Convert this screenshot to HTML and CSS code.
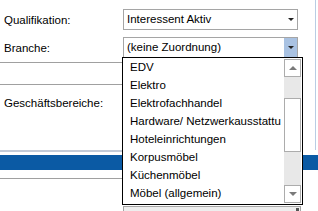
FILE: index.html
```html
<!DOCTYPE html>
<html>
  <head>
    <link rel="stylesheet" href="styles.css">
  </head>
  <body>
    <div class="screen">
      <div class="upper">
        <div class="field-row first">
          <span class="label">Qualifikation:</span>
          <div class="combo">
            <span class="combo-text">Interessent Aktiv</span>
            <span class="combo-btn"><span class="arrow-down"></span></span>
          </div>
        </div>
        <div class="field-row">
          <span class="label">Branche:</span>
          <div class="combo open">
            <span class="combo-text">(keine Zuordnung)</span>
            <span class="combo-btn"><span class="arrow-down"></span></span>
          </div>
        </div>
        <div class="sep sep-top"></div>
        <div class="sep sep-mid"></div>
        <div class="field-row">
          <span class="label">Geschäftsbereiche:</span>
        </div>
        <div class="sep-light"></div>
      </div>
      <div class="blue-bar"></div>
      <div class="gray-line"></div>
      <div class="bottom-box"><span class="grip"></span></div>

      <div class="dropdown">
        <ul class="dropdown-list">
          <li>EDV</li>
          <li>Elektro</li>
          <li>Elektrofachhandel</li>
          <li>Hardware/ Netzwerkausstattu</li>
          <li>Hoteleinrichtungen</li>
          <li>Korpusmöbel</li>
          <li>Küchenmöbel</li>
          <li>Möbel (allgemein)</li>
        </ul>
        <div class="scrollbar">
          <div class="scroll-btn"><span class="arrow-up"></span></div>
          <div class="scroll-track">
            <div class="scroll-thumb"></div>
          </div>
          <div class="scroll-btn"><span class="arrow-down gray"></span></div>
        </div>
      </div>
    </div>
  </body>
</html>
```

FILE: styles.css
```css
* {
  box-sizing: border-box;
}
body {
  margin: 0;
  background-color: #fff;
  font-family: "Liberation Sans", Arial, sans-serif;
  font-size: 11.5px;
  color: #000;
}
.screen {
  position: relative;
  width: 318px;
  height: 211px;
  overflow: hidden;
}

.upper {
  width: 316px;
  height: 150px;
  padding-top: 9px;
  border-right: 1px solid #b9cde4;
}

.field-row {
  display: flex;
  align-items: center;
  height: 21px;
  margin-top: 7px;
}
.field-row.first {
  margin-top: 0;
}
.label {
  width: 123px;
  padding-left: 4px;
}

.combo {
  display: flex;
  width: 175px;
  height: 21px;
  border: 1px solid #a5a5a5;
  background-color: #fff;
}
.combo-text {
  flex: 1;
  padding-left: 3px;
  line-height: 19px;
}
.combo-btn {
  display: flex;
  align-items: center;
  justify-content: center;
  width: 13px;
}
.combo.open .combo-btn {
  background-color: #a9c2e2;
}

.arrow-down {
  width: 0;
  height: 0;
  border-left: 3px solid transparent;
  border-right: 3px solid transparent;
  border-top: 3px solid #222;
}
.arrow-down.gray {
  border-top-color: #7a7a7a;
  border-left-width: 4px;
  border-right-width: 4px;
  border-top-width: 4px;
}
.arrow-up {
  width: 0;
  height: 0;
  border-left: 4px solid transparent;
  border-right: 4px solid transparent;
  border-bottom: 4px solid #7a7a7a;
}

.sep {
  width: 290px;
  height: 1px;
  background-color: #a0a0a0;
}
.sep-top {
  margin-top: 4px;
}
.sep-mid {
  margin-top: 21px;
}
.sep-light {
  width: 290px;
  height: 2px;
  margin-top: 37px;
  background-color: #c3cbd8;
}

.blue-bar {
  height: 15px;
  margin-top: 5px;
  background-color: #0b5aa4;
}
.gray-line {
  width: 290px;
  height: 1px;
  margin-top: 8px;
  background-color: #a0a0a0;
}
.bottom-box {
  position: relative;
  width: 178px;
  height: 10px;
  margin-top: 27px;
  margin-left: 123px;
  border: 1px solid #a5a5a5;
  background-color: #eeeeee;
}
.grip {
  position: absolute;
  right: 1px;
  top: 1px;
  width: 3px;
  height: 3px;
  background-color: #555;
}

/* open list of the Branche combo */
.dropdown {
  position: absolute;
  left: 122px;
  top: 57px;
  width: 181px;
  height: 148px;
  display: flex;
  border: 1px solid #000;
  background-color: #fff;
}
.dropdown-list {
  flex: 1;
  margin: 0;
  padding: 0;
  list-style: none;
  overflow: hidden;
}
.dropdown-list li {
  height: 18px;
  line-height: 18px;
  padding-left: 7px;
  white-space: nowrap;
}
.scrollbar {
  display: flex;
  flex-direction: column;
  width: 17px;
  margin: 1px 1px 1px 0;
}
.scroll-btn {
  display: flex;
  align-items: center;
  justify-content: center;
  height: 18px;
  border: 1px solid #acacac;
  background-color: #fff;
}
.scroll-track {
  flex: 1;
  padding-top: 21px;
  background-color: #e8e8e8;
}
.scroll-thumb {
  height: 54px;
  border: 1px solid #acacac;
  background-color: #fff;
}
```
